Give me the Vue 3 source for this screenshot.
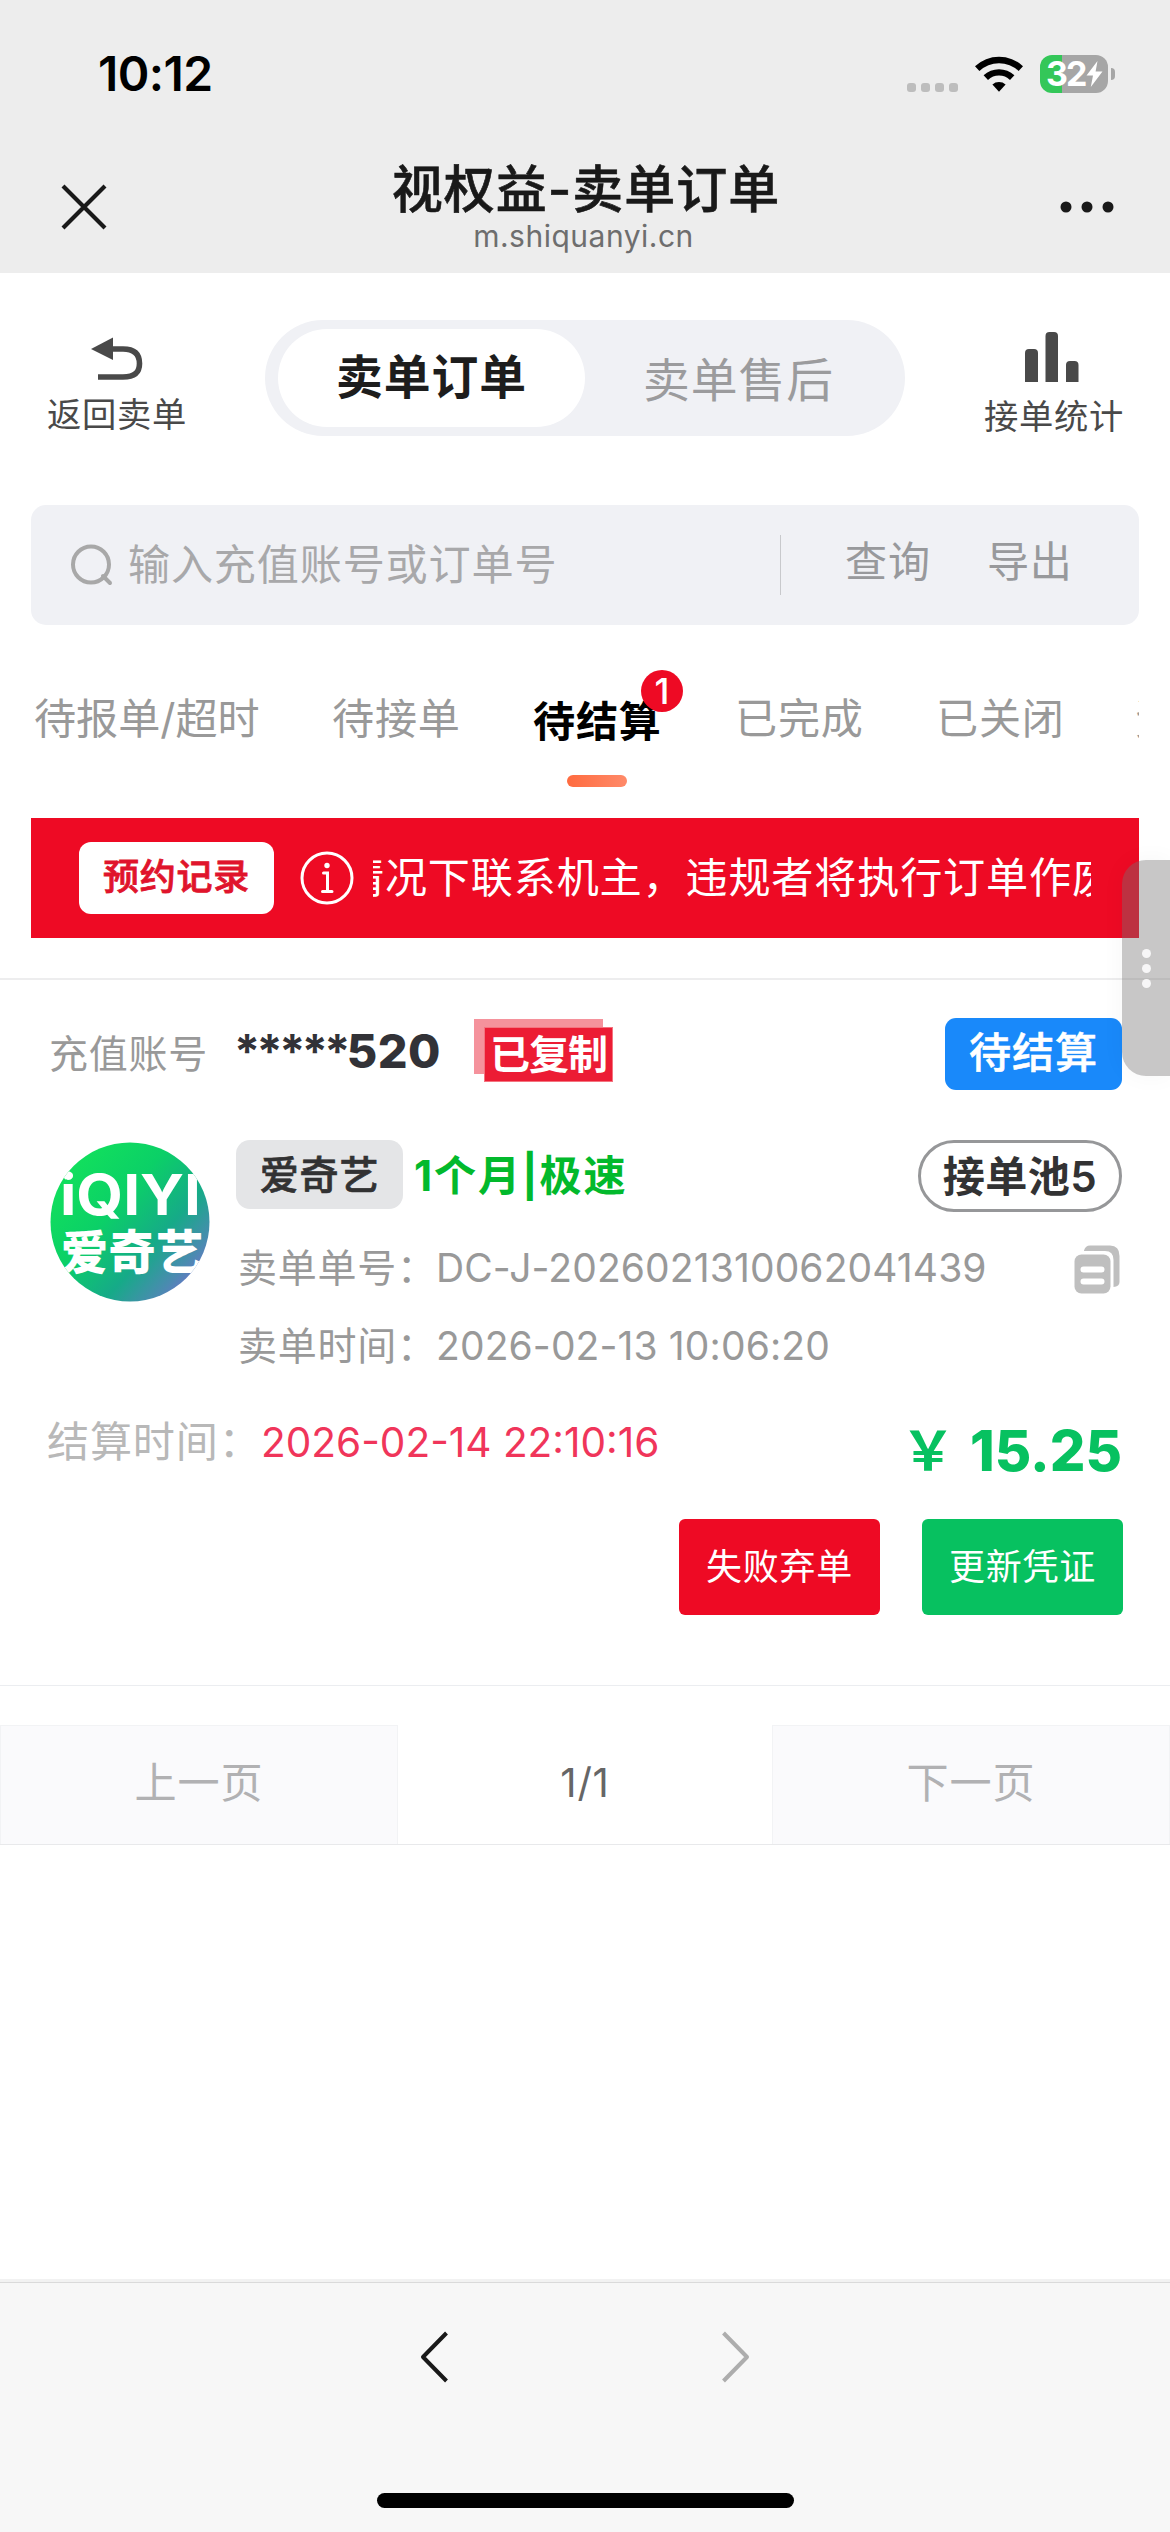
<script setup>
const tabs = [
  { label: '待报单/超时', cls: 't1' },
  { label: '待接单', cls: 't2' },
  { label: '待结算', cls: 't3', active: true, badge: 1 },
  { label: '已完成', cls: 't4' },
  { label: '已关闭', cls: 't5' },
  { label: '资料', cls: 't6' },
]
</script>

<template>
  <div class="screen">
    <header class="top">
      <div class="status">
        <span class="clock">10:12</span>
        <div class="indicators">
          <div class="signal"><i></i><i></i><i></i><i></i></div>
          <svg class="wifi" width="48" height="37" viewBox="0 0 48 37">
            <path d="M0 11.2 A35 35 0 0 1 48 11.2 L43.6 16 A28.4 28.4 0 0 0 4.4 16 Z" />
            <path d="M8.6 20.3 A22.5 22.5 0 0 1 39.4 20.3 L35 25 A16 16 0 0 0 13 25 Z" />
            <path d="M17.4 29.4 A10 10 0 0 1 30.6 29.4 L24 36.8 Z" />
          </svg>
          <div class="battery">
            <div class="cell">
              <span class="pct">32</span>
              <svg width="17" height="26" viewBox="0 0 17 26"><path d="M11.5 0 L0.5 14.6 H7 L4.8 26 L16.5 10.6 H9.6 Z" fill="#fff" /></svg>
            </div>
            <i class="nub"></i>
          </div>
        </div>
      </div>
      <div class="nav">
        <svg class="close" width="46" height="46" viewBox="0 0 46 46"><path d="M2 2 L44 44 M44 2 L2 44" stroke="#191919" stroke-width="4.2" fill="none" /></svg>
        <div class="heading">
          <div class="title">视权益-卖单订单</div>
          <div class="host">m.shiquanyi.cn</div>
        </div>
        <svg class="more" width="54" height="12" viewBox="0 0 54 12" fill="#191919"><circle cx="6" cy="6" r="5.5" /><circle cx="27" cy="6" r="5.5" /><circle cx="48" cy="6" r="5.5" /></svg>
      </div>
    </header>

    <main>
      <section class="switcher">
        <div class="side back">
          <svg width="54" height="44" viewBox="0 0 54 44"><path d="M1 12 L23 0.5 V23 Z" fill="#494949" /><path d="M22 12 H33 C46 12 49.5 19 49.5 26.500 C49.500 35 45 40 33 40 H8" fill="none" stroke="#494949" stroke-width="5.600" /></svg>
          <span>返回卖单</span>
        </div>
        <div class="segment">
          <div class="seg on">卖单订单</div>
          <div class="seg">卖单售后</div>
        </div>
        <div class="side stats">
          <svg width="54" height="50" viewBox="0 0 54 50" fill="#494949"><path d="M0 50 V21 Q0 17 4 17 H9 Q13 17 13 21 V50 Z M20.500 50 V4 Q20.500 0 24.500 0 H29 Q33 0 33 4 V50 Z M41 50 V33 Q41 29 45 29 H49.500 Q53.500 29 53.500 33 V50 Z" /></svg>
          <span>接单统计</span>
        </div>
      </section>

      <section class="search">
        <svg width="43" height="43" viewBox="0 0 43 43" fill="none" stroke="#a8a8a8" stroke-width="4"><circle cx="21" cy="20.500" r="18" /><path d="M33 32 L40 39" stroke-linecap="round" /></svg>
        <span class="placeholder">输入充值账号或订单号</span>
        <i class="rule"></i>
        <span class="act query">查询</span>
        <span class="act">导出</span>
      </section>

      <nav class="tabs">
        <div v-for="t in tabs" :key="t.label" :class="['tab', t.cls, { active: t.active }]">
          {{ t.label }}<b v-if="t.badge" class="badge">{{ t.badge }}</b>
        </div>
      </nav>

      <section class="notice">
        <div class="record">预约记录</div>
        <svg class="info" width="54" height="54" viewBox="0 0 54 54" fill="none" stroke="#fff" stroke-width="3"><circle cx="27" cy="27" r="25" /><circle cx="27" cy="14.500" r="2.700" fill="#fff" stroke="none" /><path d="M23.500 22 H27.500 V40.500 M22.500 40.500 H32" stroke-linecap="round" /></svg>
        <div class="marquee"><span>情况下联系机主，违规者将执行订单作废</span></div>
      </section>

      <article class="order">
        <div class="row account">
          <span class="label">充值账号</span>
          <span class="number"><span class="mask">*****</span><span class="tail">520</span></span>
          <span class="stamp"><span>已复制</span></span>
          <span class="state">待结算</span>
        </div>
        <div class="body">
          <svg class="logo" width="160" height="160" viewBox="0 0 160 160">
            <defs>
              <linearGradient id="brand" x1="0.100" y1="0.150" x2="0.950" y2="0.900">
                <stop offset="0" stop-color="#12e05c" /><stop offset="0.350" stop-color="#0bd067" /><stop offset="0.650" stop-color="#16aa88" /><stop offset="0.850" stop-color="#4a8bb0" /><stop offset="1" stop-color="#7b6ad6" />
              </linearGradient>
              <clipPath id="disc"><circle cx="80" cy="80" r="79.500" /></clipPath>
            </defs>
            <g clip-path="url(#disc)">
              <rect width="160" height="160" fill="url(#brand)" />
              <text x="10" y="73" class="latin" textLength="141" lengthAdjust="spacingAndGlyphs">iQIYI</text>
              <text x="11" y="127" class="hanzi" textLength="142">爱奇艺</text>
            </g>
          </svg>
          <div class="info-col">
            <div class="row product">
              <span class="brand">爱奇艺</span>
              <span class="plan">1个月|极速</span>
              <span class="pool">接单池5</span>
            </div>
            <div class="row detail">
              <span class="key">卖单单号：</span><span class="val no">DC-J-2026021310062041439</span>
              <svg class="copy" width="46" height="49" viewBox="0 0 46 49"><path d="M10 5.500 Q11.500 0.500 16 0.500 H36 Q45.500 0.500 45.500 11 V37 Q45.500 41.500 39.500 42 V15 Q39.500 6 31 6 H10 Z" fill="#bfbfbf" /><rect x="0.500" y="9.500" width="36" height="39" rx="7" fill="#bfbfbf" /><path d="M9.500 24.500 H27.500 M9.500 36.500 H27.500" stroke="#fff" stroke-width="6" stroke-linecap="round" /></svg>
            </div>
            <div class="row detail second"><span class="key">卖单时间：</span><span class="val time">2026-02-13 10:06:20</span></div>
          </div>
        </div>
        <div class="row settle">
          <span class="key">结算时间：</span>
          <span class="when">2026-02-14 22:10:16</span>
          <span class="price"><span class="yen">￥</span>15.25</span>
        </div>
        <div class="actions">
          <button class="drop">失败弃单</button>
          <button class="renew">更新凭证</button>
        </div>
      </article>

      <section class="pager">
        <div class="page">上一页</div>
        <div class="current">1/1</div>
        <div class="page">下一页</div>
      </section>
    </main>

    <footer class="toolbar">
      <div class="arrows">
        <svg width="30" height="52" viewBox="0 0 30 52" fill="none" stroke="#191919" stroke-width="4" stroke-linejoin="round"><path d="M27.500 2 L4 26 L27.500 50" /></svg>
        <svg width="30" height="52" viewBox="0 0 30 52" fill="none" stroke="#adadad" stroke-width="4" stroke-linejoin="round"><path d="M2.500 2 L26 26 L2.500 50" /></svg>
      </div>
      <i class="home"></i>
    </footer>

    <div class="handle"><i></i><i></i><i></i></div>
  </div>
</template>

<style>
body { margin: 0; background: #fff; }
</style>

<style scoped>
* { box-sizing: border-box; letter-spacing: 0.02em; }
.screen {
  position: relative;
  width: 1170px;
  height: 2532px;
  display: flex;
  flex-direction: column;
  overflow: hidden;
  background: #fff;
  font-family: Inter, "Noto Sans CJK SC", sans-serif;
  line-height: 1.4;
  white-space: nowrap;
}
main { flex: 1; }
svg { display: block; flex: none; }
.top { height: 273px; background: #ededed; }
.status { height: 150px; padding: 0 55px 0 98px; display: flex; justify-content: space-between; }
.clock { font-size: 48px; font-weight: 600; line-height: 60px; margin-top: 44px; letter-spacing: -0.6px; color: #000; }
.indicators { display: flex; align-items: flex-start; padding-top: 55px; }
.signal { display: flex; gap: 5px; margin: 28px 17px 0 0; }
.signal i { width: 9px; height: 9px; border-radius: 3px; background: #bdbdbd; }
.wifi { margin-right: 17px; }
.battery { display: flex; align-items: center; gap: 3px; }
.cell {
  width: 68px; height: 38px; border-radius: 12px;
  background: linear-gradient(90deg, #34c759 0 22px, #a6a6a6 22px);
  display: flex; align-items: center; gap: 1px; padding-left: 6px;
}
.pct { color: #fff; font-size: 34px; font-weight: 700; line-height: 38px; letter-spacing: -2px; }
.nub { width: 4px; height: 12px; border-radius: 0 5px 5px 0; background: #a6a6a6; }
.nav { height: 123px; display: flex; justify-content: space-between; padding: 0 56px 0 61px; }
.close { margin-top: 34px; }
.heading { flex: 1; text-align: center; color: #191919; }
.title { font-size: 51px; font-weight: 500; line-height: 60px; margin-top: 10px; margin-left: 5px; -webkit-text-stroke: 0.6px #191919; }
.host { font-size: 30px; line-height: 34px; margin-top: -1px; color: #6e6e6e; letter-spacing: 0.5px; }
.more { margin-top: 51px; }

.switcher { height: 232px; display: flex; padding: 47px 46px 0 47px; color: #494949; }
.side { width: 140px; display: flex; flex-direction: column; font-size: 34.3px; line-height: 40px; }
.back svg { margin: 17px 0 14px 43px; }
.stats { margin-left: auto; }
.stats svg { margin: 12px 0 15px 41px; }
.segment { width: 640px; height: 116px; margin-left: 78px; padding: 9px 13px; border-radius: 58px; background: #f0f1f5; display: flex; }
.seg { width: 307px; height: 98px; border-radius: 49px; text-align: center; font-size: 46.8px; line-height: 102px; color: #9b9b9d; }
.seg.on { background: #fff; color: #1d1d1d; font-weight: 700; line-height: 96px; }

.search { height: 120px; margin: 0 31px; padding-left: 39px; border-radius: 15px; background: #f0f1f5; display: flex; align-items: center; font-size: 42.1px; line-height: 120px; color: #a8a8aa; }
.placeholder { margin-left: 15px; width: 652px; }
.rule { width: 1px; height: 60px; background: #c8c9cc; }
.act { color: #98999c; margin-right: 56px; position: relative; top: -3px; }
.query { margin-left: 64px; }

.tabs { height: 193px; margin: 0 31px; padding-left: 3px; display: flex; overflow: hidden; font-size: 42.1px; line-height: 60px; color: #999; }
.tab { flex: none; position: relative; padding-top: 64px; }
.t1 { width: 298px; letter-spacing: 0; } .t2 { width: 201px; } .t3 { width: 202px; } .t4 { width: 201px; } .t5 { width: 199px; }
.tab.active { color: #000; font-weight: 700; padding-top: 67px; }
.tab.active::after { content: ""; position: absolute; left: 34px; top: 150px; width: 60px; height: 12px; border-radius: 6px; background: linear-gradient(90deg, #ff6b3f, #ff8a69); }
.badge { position: absolute; left: 108px; top: 45px; width: 42px; height: 42px; border-radius: 50%; background: #ee0a24; color: #fff; font-size: 36px; font-weight: 500; line-height: 42px; text-align: center; letter-spacing: 0; }

.notice { height: 120px; margin: 0 31px; padding: 0 48px; display: flex; align-items: center; background: #ee0a24; color: #fff; }
.record { width: 195px; height: 72px; border-radius: 12px; background: #fff; color: #e0142c; text-align: center; font-size: 36px; font-weight: 500; line-height: 71px; -webkit-text-stroke: 0.8px #e0142c; }
.info { margin: 0 19px 0 26px; }
.marquee { width: 718px; overflow: hidden; font-size: 42.1px; line-height: 62px; }
.marquee span { display: inline-block; margin-left: -31px; }

.order { height: 708px; margin-top: 40px; padding: 38px 48px 0 49px; border-top: 2px solid #ededee; border-bottom: 1px solid #ebedf0; }
.row { display: flex; align-items: center; }
.account { height: 72px; }
.label { width: 185px; font-size: 39px; color: #999; }
.number { width: 240px; font-size: 46.8px; font-weight: 700; color: #323237; margin-top: -4px; }
.mask { letter-spacing: -3.6px; }
.tail { letter-spacing: 0.4px; font-weight: 800; }
.stamp { width: 139px; height: 63px; margin-top: -8px; padding: 8px 0 0 10px; background: linear-gradient(#f5929c, #f5929c) 0 0 / 129px 55px no-repeat; }
.stamp span { display: block; height: 55px; border: 1px solid #f4737f; background: #ec1c34; color: #fff; font-size: 40px; font-weight: 700; line-height: 53px; text-align: center; letter-spacing: -1px; }
.state { width: 177px; height: 72px; margin-left: auto; border-radius: 11px; background: #1989fa; color: #fff; font-size: 42.1px; font-weight: 500; line-height: 70px; text-align: center; -webkit-text-stroke: 0.5px #fff; }
.body { display: flex; margin-top: 50px; }
.logo { margin: 2px 27px 0 1px; }
.latin { font: 700 56px Inter, sans-serif; fill: #fff; letter-spacing: 0; }
.hanzi { font: 900 47px "Noto Sans CJK SC", sans-serif; fill: #fff; letter-spacing: 0; }
.info-col { flex: 1; }
.product { height: 72px; }
.brand { width: 167px; height: 69px; margin: -3px 11px 0 -1px; border-radius: 14px; background: #e4e5e7; color: #323233; font-size: 39px; font-weight: 500; line-height: 69px; text-align: center; -webkit-text-stroke: 0.7px #323233; }
.plan { font-size: 42.1px; font-weight: 700; color: #02b92c; letter-spacing: 1.9px; }
.pool { width: 204px; height: 72px; margin-left: auto; border: 3px solid #969799; border-radius: 36px; color: #323233; font-size: 42.1px; font-weight: 600; line-height: 67px; text-align: center; letter-spacing: 0.4px; }
.detail { height: 78px; margin-top: 17px; font-size: 39px; color: #999; }
.detail.second { margin-top: 0; }
.detail .key { width: 199px; padding-left: 1px; }
.val { letter-spacing: 0.12px; }
.copy { margin: 3px 2px 0 auto; }
.settle { height: 77px; margin-top: 19px; }
.settle .key { width: 214px; font-size: 42.1px; color: #b8b8b8; margin-left: -2px; }
.when { font-size: 40.56px; color: #f0355a; letter-spacing: 0; margin-top: 2px; }
.price { margin-left: auto; margin-top: 18px; font-size: 56px; font-weight: 800; line-height: 60px; color: #07c160; letter-spacing: 0; }
.yen { font-size: 54px; font-weight: 700; margin-right: 14px; }
.actions { display: flex; justify-content: flex-end; gap: 42px; margin: 38px -1px 0 0; }
.actions button { width: 201px; height: 96px; border: 0; border-radius: 6px; padding: 0; color: #fff; font: 400 36px/94px Inter, "Noto Sans CJK SC", sans-serif; }
.drop { background: #ee0a24; }
.renew { background: #07c160; }

.pager { height: 120px; margin-top: 39px; display: flex; border-bottom: 1px solid #e8e9eb; font-size: 42.1px; line-height: 114px; text-align: center; }
.page { width: 398px; background: #fafafc; border: 1px solid #f2f3f5; border-bottom: 0; color: #b1b1b3; }
.current { flex: 1; color: #666; font-size: 40px; line-height: 116px; }

.toolbar { height: 253px; border-top: 3px solid #f2f2f2; background: #f7f7f7; display: flex; flex-direction: column; align-items: center; }
.arrows { width: 100%; height: 211px; padding-top: 48px; border-top: 1px solid #dadada; display: flex; justify-content: center; gap: 272px; }
.home { width: 417px; height: 15px; border-radius: 8px; background: #000; }

.handle { position: absolute; right: 0; top: 860px; width: 48px; height: 216px; border-radius: 24px 0 0 24px; background: rgba(113, 110, 112, 0.39); box-shadow: 0 0 24px rgba(0, 0, 0, 0.04); display: flex; flex-direction: column; align-items: center; justify-content: center; gap: 6px; }
.handle i { width: 9px; height: 9px; border-radius: 50%; background: #f7f6f7; }
</style>
